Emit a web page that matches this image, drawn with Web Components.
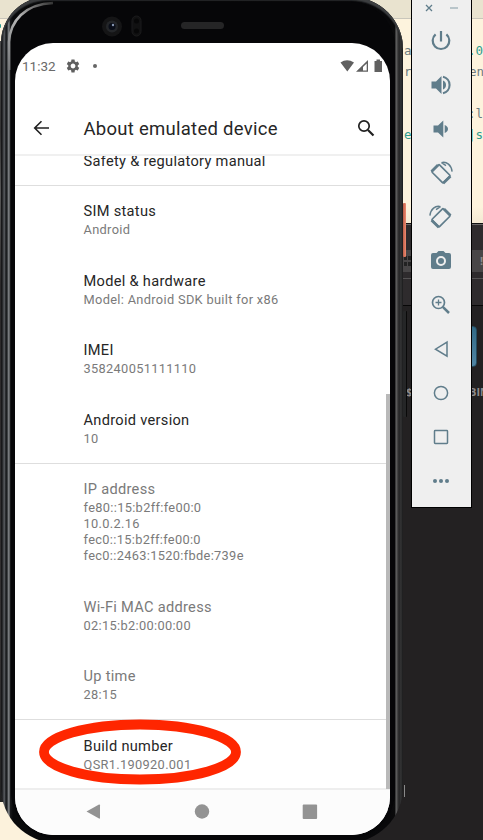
<!DOCTYPE html>
<html lang="en">
<head>
<meta charset="utf-8">
<title>About emulated device</title>
<style>
html,body{margin:0;padding:0}
body{width:483px;height:840px;overflow:hidden;position:relative;font-family:Roboto,"Liberation Sans",sans-serif;background:#232122}
desk-backdrop,phone-frame,tool-bar{position:absolute}
desk-backdrop{inset:0}
phone-frame{left:1px;top:-3px}
tool-bar{left:411px;top:0}
</style>
</head>
<body>
<desk-backdrop></desk-backdrop>
<phone-frame>
  <status-bar></status-bar>
  <app-header>About emulated device</app-header>
  <settings-list>
    <setting-item class="cut" last>Safety &amp; regulatory manual</setting-item>
    <setting-item>SIM status<span slot="sub">Android</span></setting-item>
    <setting-item>Model &amp; hardware<span slot="sub">Model: Android SDK built for x86</span></setting-item>
    <setting-item>IMEI<span slot="sub">358240051111110</span></setting-item>
    <setting-item last>Android version<span slot="sub">10</span></setting-item>
    <setting-item muted>IP address<span slot="sub">fe80::15:b2ff:fe00:0<br>10.0.2.16<br>fec0::15:b2ff:fe00:0<br>fec0::2463:1520:fbde:739e</span></setting-item>
    <setting-item muted>Wi-Fi MAC address<span slot="sub">02:15:b2:00:00:00</span></setting-item>
    <setting-item muted last>Up time<span slot="sub">28:15</span></setting-item>
    <setting-item>Build number<span slot="sub">QSR1.190920.001</span></setting-item>
  </settings-list>
  <nav-bar></nav-bar>
</phone-frame>
<tool-bar></tool-bar>

<script>
const define = (name, html) => customElements.define(name, class extends HTMLElement {
  constructor() {
    super();
    const t = document.createElement('template');
    t.innerHTML = html;
    this.attachShadow({ mode: 'open' }).appendChild(t.content.cloneNode(true));
  }
});

define('desk-backdrop', `
<style>
:host{display:block;overflow:hidden}
div,span{position:absolute}
span{font:12.5px/16px "DejaVu Sans Mono","Liberation Mono",monospace;white-space:pre;color:#6d7b80}
.g{color:#2f9d90}
.top{left:0;right:0;top:0;height:18px;background:#e9e3cf;border-bottom:1px solid #c9c6bb}
.page{left:0;right:0;top:19px;height:204px;background:linear-gradient(#fdf3dd 92%,#f3e9d3)}
.edge{left:0;width:12px;top:41px;height:761px;background:linear-gradient(#4a4a4a,#333 12%,#575757 20%,#2b292a 32%,#343233 80%,#222)}
.foot{left:0;width:60px;top:802px;height:38px;background:#fcf2dc}
.tabs{left:380px;right:0;top:223px;height:81px;background:#2e2b2d;border-top:1px solid #111;border-bottom:1px solid #070707;box-shadow:inset 0 1px #6a6869}
.strip{left:380px;right:0;top:250px;height:22px;background:#484647}
.line{left:380px;right:0;top:278px;height:1px;background:#555354}
.blue{left:465px;width:12px;top:326px;height:41px;border-radius:0 4px 4px 0;background:linear-gradient(#326985,#5085a4);box-sizing:border-box;border:1px solid #244b5e}
.b{font:bold 11px/14px "Open Sans",sans-serif;color:#8c8a8b}
.grid{left:404px;top:256px;width:3px;height:4px;background:#222;box-shadow:4px 0 #222,0 6px #222,4px 6px #222}
.tick{left:404px;width:1px;top:785px;height:12px;background:#8a8a8a}
.dot{left:-2px;top:24px;width:3px;height:4px;background:#2f9d90;border-radius:1px}
</style>
<div class="top"></div><div class="page"></div><div class="edge"></div><div class="foot"></div>
<div class="tabs"></div><div class="strip"></div><div class="line"></div><div class="grid"></div><div class="blue"></div><div class="tick"></div><div class="dot"></div>
<span style="left:404px;top:43px">a</span><span style="left:404px;top:64px">r</span><span class="g" style="left:404px;top:127px">e</span>
<span class="g" style="left:468px;top:43px">.0</span><span style="left:469px;top:64px">en</span><span style="left:468px;top:106px">:l</span><span class="g" style="left:468px;top:127px">|s</span>
<span class="b" style="left:406px;top:385px">$</span><span class="b" style="left:469px;top:385px">BIN</span>
<span class="b" style="left:480px;top:254px">!</span>`);

define('phone-frame', `
<style>
:host{display:block;width:402px;height:846px;box-sizing:border-box}
.body{box-sizing:border-box;height:846px;padding:46px 13px 5px 14px;border-radius:46px 52px 56px 56px;
 background:linear-gradient(90deg,#141517 0 1px,#3b3d40 2px,#515458 3.5px,#17191b 5px,#222527 6px,#777a7d 7.5px,#5c5f61 8.5px,#17181a 9.5px,#090a0b 12px,#060607 50%,#08080a calc(100% - 13px),#0b0b0c calc(100% - 8px),#686868 calc(100% - 7px),#4c4c4c calc(100% - 6px),#242425 calc(100% - 4px),#343536 calc(100% - 2px),#151516)}
.face{position:absolute;left:10px;right:8px;top:5px;bottom:4px;border-radius:40px 45px 48px 48px;background:#060608}
.rim{position:absolute;inset:0;border-radius:46px 52px 56px 56px;box-shadow:inset 0 3px 1px #3d3f41,inset 0 4px 1px #222426}
.arc{position:absolute;left:6px;top:3px;width:48px;height:70px}
.screen{position:relative;display:flex;flex-direction:column;height:792px;width:375px;border-radius:38px;overflow:hidden;background:#fff}
.cam{position:absolute;left:100px;top:18px;width:90px;height:24px}
.speaker{position:absolute;left:180px;top:25px;width:43px;height:7px;border-radius:4px;background:#252526}
.power{position:absolute;right:-3px;top:206px;width:3px;height:54px;border-radius:1px;background:linear-gradient(90deg,#bb5e49,#f18a70)}
.vol{position:absolute;right:-4px;top:314px;width:3px;height:106px;border-radius:1px;background:#252627;border-right:1px solid #090909}
.mark{position:absolute;left:37px;top:722px;width:204px;height:66px}
.scroll{position:absolute;right:0;top:351px;width:4px;height:395px;background:#b9b9b9}
</style>
<div class="power"></div><div class="vol"></div>
<div class="body"><div class="rim"></div><div class="face"></div>
<svg class="arc" viewBox="0 0 48 70"><defs><linearGradient id="s" x1="0" y1="1" x2="1" y2="0"><stop stop-color="#77797b"/><stop offset=".5" stop-color="#b9b9b9"/><stop offset="1" stop-color="#333"/></linearGradient></defs><path d="M2 70V42C3 21 18 4 46 3" fill="none" stroke="url(#s)" stroke-width="2.6"/></svg>
<div class="speaker"></div>
<svg class="cam" viewBox="0 0 90 24"><circle cx="11" cy="11.500" r="10" fill="#151516"/><circle cx="11" cy="11.500" r="6" fill="#242629"/><circle cx="11" cy="11.500" r="3.500" fill="#090d18"/><circle cx="12" cy="10" r="1.200" fill="#8696b2"/><rect x="31" y="1" width="9" height="20" rx="4.500" fill="#111112" stroke="#1b1b1c"/><circle cx="35.500" cy="6" r="2.500" fill="#070708"/><circle cx="35.500" cy="16" r="2.500" fill="#070708"/></svg>
<div class="screen"><slot></slot><div class="scroll"></div></div></div>
<svg class="mark" viewBox="0 0 204 66"><ellipse cx="102" cy="33" rx="96" ry="27.500" fill="none" stroke="#ff2600" stroke-width="9.800"/></svg>`);

define('status-bar', `
<style>
:host{display:flex;align-items:center;height:24px;padding:11px 6px 0 7px;box-sizing:content-box;color:#6a6a6a;font-size:13.500px}
svg{display:block}.gear{margin-left:10px}.dot{width:4px;height:4px;border-radius:50%;background:#666;margin-left:13px}
.r{margin-left:auto}
</style>
<span>11:32</span>
<svg class="gear" width="14" height="14" viewBox="1.500 1.500 21 21"><path fill="#606060" d="M19.140 12.940c.04-.3.060-.61.060-.94 0-.32-.02-.64-.07-.94l2.030-1.580a.49.49 0 0 0 .12-.61l-1.920-3.320a.488.488 0 0 0-.59-.22l-2.390.96c-.5-.38-1.030-.7-1.620-.94l-.36-2.540a.484.484 0 0 0-.48-.41h-3.840c-.24 0-.43.17-.47.41l-.36 2.540c-.59.24-1.130.57-1.620.94l-2.390-.96c-.22-.08-.47 0-.59.22L2.740 8.870c-.12.21-.08.47.12.61l2.030 1.580c-.05.3-.09.63-.09.94s.02.64.07.94l-2.030 1.580a.49.49 0 0 0-.12.61l1.920 3.320c.12.22.37.29.59.22l2.390-.96c.5.38 1.030.7 1.620.94l.36 2.540c.05.24.24.41.48.41h3.840c.24 0 .44-.17.47-.41l.36-2.540c.59-.24 1.130-.56 1.620-.94l2.390.96c.22.08.47 0 .59-.22l1.920-3.320c.12-.22.070-.47-.12-.61l-2.010-1.580zM12 15.600A3.610 3.610 0 0 1 8.400 12c0-1.980 1.620-3.600 3.600-3.600s3.600 1.620 3.600 3.600-1.620 3.600-3.600 3.600z"/></svg>
<i class="dot"></i>
<svg class="r" width="44" height="14" viewBox="0 0 44 14"><path fill="#606060" d="M.5 3.500Q7-1 14 3.500L7.300 12.500zM34.500 2h2V.5h3.500V2h2v11h-7.500z"/><path fill="#606060" fill-rule="evenodd" d="M16 12.700 28 1v11.700zM23 11.500h3.700V4.500L23 8z"/></svg>`);

define('app-header', `
<style>
:host{display:flex;align-items:center;height:52px;padding:25px 15px 0 18px;box-sizing:content-box;color:#262626;font-size:18.5px;letter-spacing:.27px;border-bottom:2px solid #f0f0f0;line-height:24px;margin-top:-1px}
.t{margin-left:33.500px}.s{margin-left:auto}svg{display:block}
.t{position:relative;top:1px}
</style>
<svg width="17" height="16" viewBox="0 0 17 16" fill="none" stroke="#212121" stroke-width="1.600"><path d="M16 8H2M8.500 1.200 1.700 8l6.800 6.800"/></svg>
<span class="t"><slot></slot></span>
<svg class="s" width="18" height="18" viewBox="0 0 18 18" fill="none" stroke="#212121"><circle cx="7" cy="7" r="5.200" stroke-width="1.700"/><path d="m11 11 5.500 5.500" stroke-width="2.200"/></svg>`);

define('settings-list', `
<style>:host{display:block;flex:1;overflow:hidden}
::slotted(.cut){height:30px!important;--top:-4.600px}
</style><slot></slot>`);

define('setting-item', `
<style>
:host{display:block;box-sizing:border-box;padding:0 0 17.300px 68.500px;color:#262626;overflow:hidden}
:host([muted]){color:#7a7a7a}
:host([last]){border-bottom:1px solid #dedede;padding-bottom:16.300px}
.t{font-size:14.6px;line-height:20px;letter-spacing:.3px;margin-top:var(--top,15.200px)}
.s{font-size:12.8px;line-height:16px;letter-spacing:.33px;color:#7a7a7a;margin-top:1px}
</style>
<div class="t"><slot></slot></div><div class="s"><slot name="sub"></slot></div>`);

define('nav-bar', `
<style>
:host{display:flex;height:47px;box-sizing:border-box;background:#fcfcfc;border-top:2px solid #eee}
svg{display:block}
</style>
<svg width="375" height="44" viewBox="0 0 375 44" fill="#939393"><path d="M71.500 21.500 84 14.500q1-.3 1 .8v12.500q0 1.100-1 .8z"/><circle cx="187" cy="21.500" r="7.200"/><rect x="287.700" y="14.500" width="14.400" height="14.400" rx="1"/></svg>`);

define('tool-bar', `
<style>
:host{display:flex;flex-direction:column;box-sizing:border-box;width:61px;height:508px;border:1px solid #000;border-top:0;background:#efefef}
svg{display:block;stroke:#607d8b;fill:none}
.win{height:19px}
.b{display:flex;height:44px;align-items:center;justify-content:center;padding-right:2px}
</style>
<svg class="win" width="59" height="19" viewBox="0 0 59 19" stroke-width="1.300"><path d="m14 5 6 6m0-6-6 6"/><path d="M38 8h8" stroke="#9dafb7"/></svg>
<div class="b"><svg width="22" height="22" viewBox="0 0 22 22" stroke-width="2.200"><path d="M11 1v10.500M5.600 4.400a8.300 8.300 0 1 0 10.800 0"/></svg></div>
<div class="b"><svg width="22" height="22" viewBox="0 0 22 22" stroke-width="2.100"><path d="M1.500 7.500h4.500L11.500 2v18L6 14.500H1.500z" fill="#607d8b" stroke="none"/><path d="M13 6.500v9q3-1.300 3-4.500t-3-4.500z" fill="#607d8b" stroke="none"/><path d="M13 2.800a8.400 8.400 0 0 1 0 16.400"/></svg></div>
<div class="b"><svg width="22" height="22" viewBox="0 0 22 22"><path d="M3.500 7.500H8L13.300 2.500v17L8 14.500H3.500zM14.700 7v8q3.300-1.300 3.300-4t-3.300-4z" fill="#607d8b" stroke="none"/></svg></div>
<div class="b"><svg width="26" height="26" viewBox="0 0 26 26"><rect x="5" y="8.500" width="16" height="10.500" rx="1" transform="rotate(45 13 13.750)" stroke-width="1.700"/><path d="m3.500 11.500 6.500-6.500M15.200 23.200l7.200-7" stroke-width="2.800"/><path d="M13.500 2.600c5-1.600 10 2.700 10.600 9M13.500 2.600l4.500 3" stroke-width="1.400"/></svg></div>
<div class="b"><svg width="26" height="26" viewBox="0 0 26 26"><g transform="matrix(-1 0 0 1 26 0)"><rect x="5" y="8.500" width="16" height="10.500" rx="1" transform="rotate(45 13 13.750)" stroke-width="1.700"/><path d="m3.500 11.500 6.500-6.500M15.200 23.200l7.200-7" stroke-width="2.800"/><path d="M13.500 2.600c5-1.600 10 2.700 10.600 9M13.500 2.600l4.500 3" stroke-width="1.400"/></g></svg></div>
<div class="b"><svg width="22" height="22" viewBox="0 0 22 22"><path d="M3 3h3.500l2-2h5l2 2H19q2 0 2 2v12q0 2-2 2H3q-2 0-2-2V5q0-2 2-2z" fill="#607d8b" stroke="none"/><circle cx="11" cy="11" r="4" stroke="#efefef" stroke-width="2"/></svg></div>
<div class="b"><svg width="22" height="22" viewBox="0 0 22 22"><circle cx="8.500" cy="8.500" r="6" stroke-width="1.700"/><path d="m12.800 12.800 6.200 6.200" stroke-width="2.500"/><path d="M8.500 5.500v6m-3-3h6" stroke-width="1.300"/></svg></div>
<div class="b"><svg width="22" height="22" viewBox="0 0 22 22" stroke-width="1.500"><path d="M17 4.200v14L5.500 11.200z"/></svg></div>
<div class="b"><svg width="22" height="22" viewBox="0 0 22 22" stroke-width="1.500"><circle cx="11" cy="11" r="6.600"/></svg></div>
<div class="b"><svg width="22" height="22" viewBox="0 0 22 22" stroke-width="1.500"><rect x="4.500" y="4.500" width="13" height="13" rx=".7"/></svg></div>
<div class="b"><svg width="22" height="22" viewBox="0 0 22 22"><g fill="#607d8b" stroke="none"><circle cx="5" cy="11" r="2"/><circle cx="11" cy="11" r="2"/><circle cx="17" cy="11" r="2"/></g></svg></div>`);
</script>
</body>
</html>
